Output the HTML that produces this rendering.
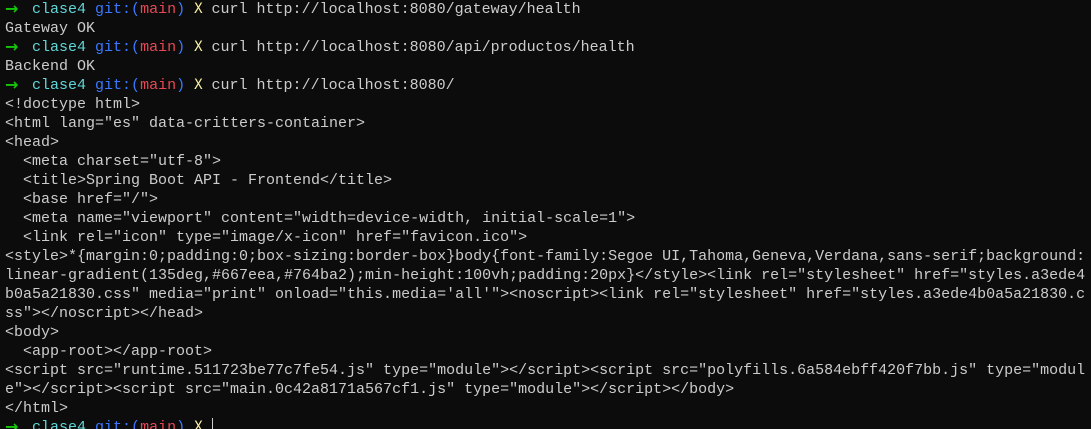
<!DOCTYPE html>
<html><head><meta charset="utf-8"><style>
html,body{margin:0;padding:0;background:#0c0c0c;width:1091px;height:429px;overflow:hidden}
pre{margin:0;padding:0 0 0 5px;font-family:"Liberation Mono","DejaVu Sans Mono",monospace;font-size:15px;line-height:19px;color:#cccccc;white-space:pre}
.g{color:#16c60c;font-weight:bold;display:inline-block;width:9px;font-size:16px;line-height:0;font-family:"DejaVu Sans",sans-serif;position:relative;top:1px}
.c{color:#61d6d6}.b{color:#3b78ff}.r{color:#e74856}.y{color:#f9f1a5;font-family:"DejaVu Sans Mono",monospace;font-size:14px}
.cur{display:inline-block;width:1px;height:17px;background:#ccc;vertical-align:-4px}
</style></head><body><pre><span class="g">→</span>  <span class="c">clase4</span> <span class="b">git:(</span><span class="r">main</span><span class="b">)</span> <span class="y">X</span> curl http://localhost:8080/gateway/health
Gateway OK
<span class="g">→</span>  <span class="c">clase4</span> <span class="b">git:(</span><span class="r">main</span><span class="b">)</span> <span class="y">X</span> curl http://localhost:8080/api/productos/health
Backend OK
<span class="g">→</span>  <span class="c">clase4</span> <span class="b">git:(</span><span class="r">main</span><span class="b">)</span> <span class="y">X</span> curl http://localhost:8080/
&lt;!doctype html&gt;
&lt;html lang="es" data-critters-container&gt;
&lt;head&gt;
  &lt;meta charset="utf-8"&gt;
  &lt;title&gt;Spring Boot API - Frontend&lt;/title&gt;
  &lt;base href="/"&gt;
  &lt;meta name="viewport" content="width=device-width, initial-scale=1"&gt;
  &lt;link rel="icon" type="image/x-icon" href="favicon.ico"&gt;
&lt;style&gt;*{margin:0;padding:0;box-sizing:border-box}body{font-family:Segoe UI,Tahoma,Geneva,Verdana,sans-serif;background:
linear-gradient(135deg,#667eea,#764ba2);min-height:100vh;padding:20px}&lt;/style&gt;&lt;link rel="stylesheet" href="styles.a3ede4
b0a5a21830.css" media="print" onload="this.media='all'"&gt;&lt;noscript&gt;&lt;link rel="stylesheet" href="styles.a3ede4b0a5a21830.c
ss"&gt;&lt;/noscript&gt;&lt;/head&gt;
&lt;body&gt;
  &lt;app-root&gt;&lt;/app-root&gt;
&lt;script src="runtime.511723be77c7fe54.js" type="module"&gt;&lt;/script&gt;&lt;script src="polyfills.6a584ebff420f7bb.js" type="modul
e"&gt;&lt;/script&gt;&lt;script src="main.0c42a8171a567cf1.js" type="module"&gt;&lt;/script&gt;&lt;/body&gt;
&lt;/html&gt;
<span class="g">→</span>  <span class="c">clase4</span> <span class="b">git:(</span><span class="r">main</span><span class="b">)</span> <span class="y">X</span> <span class="cur"></span></pre></body></html>
